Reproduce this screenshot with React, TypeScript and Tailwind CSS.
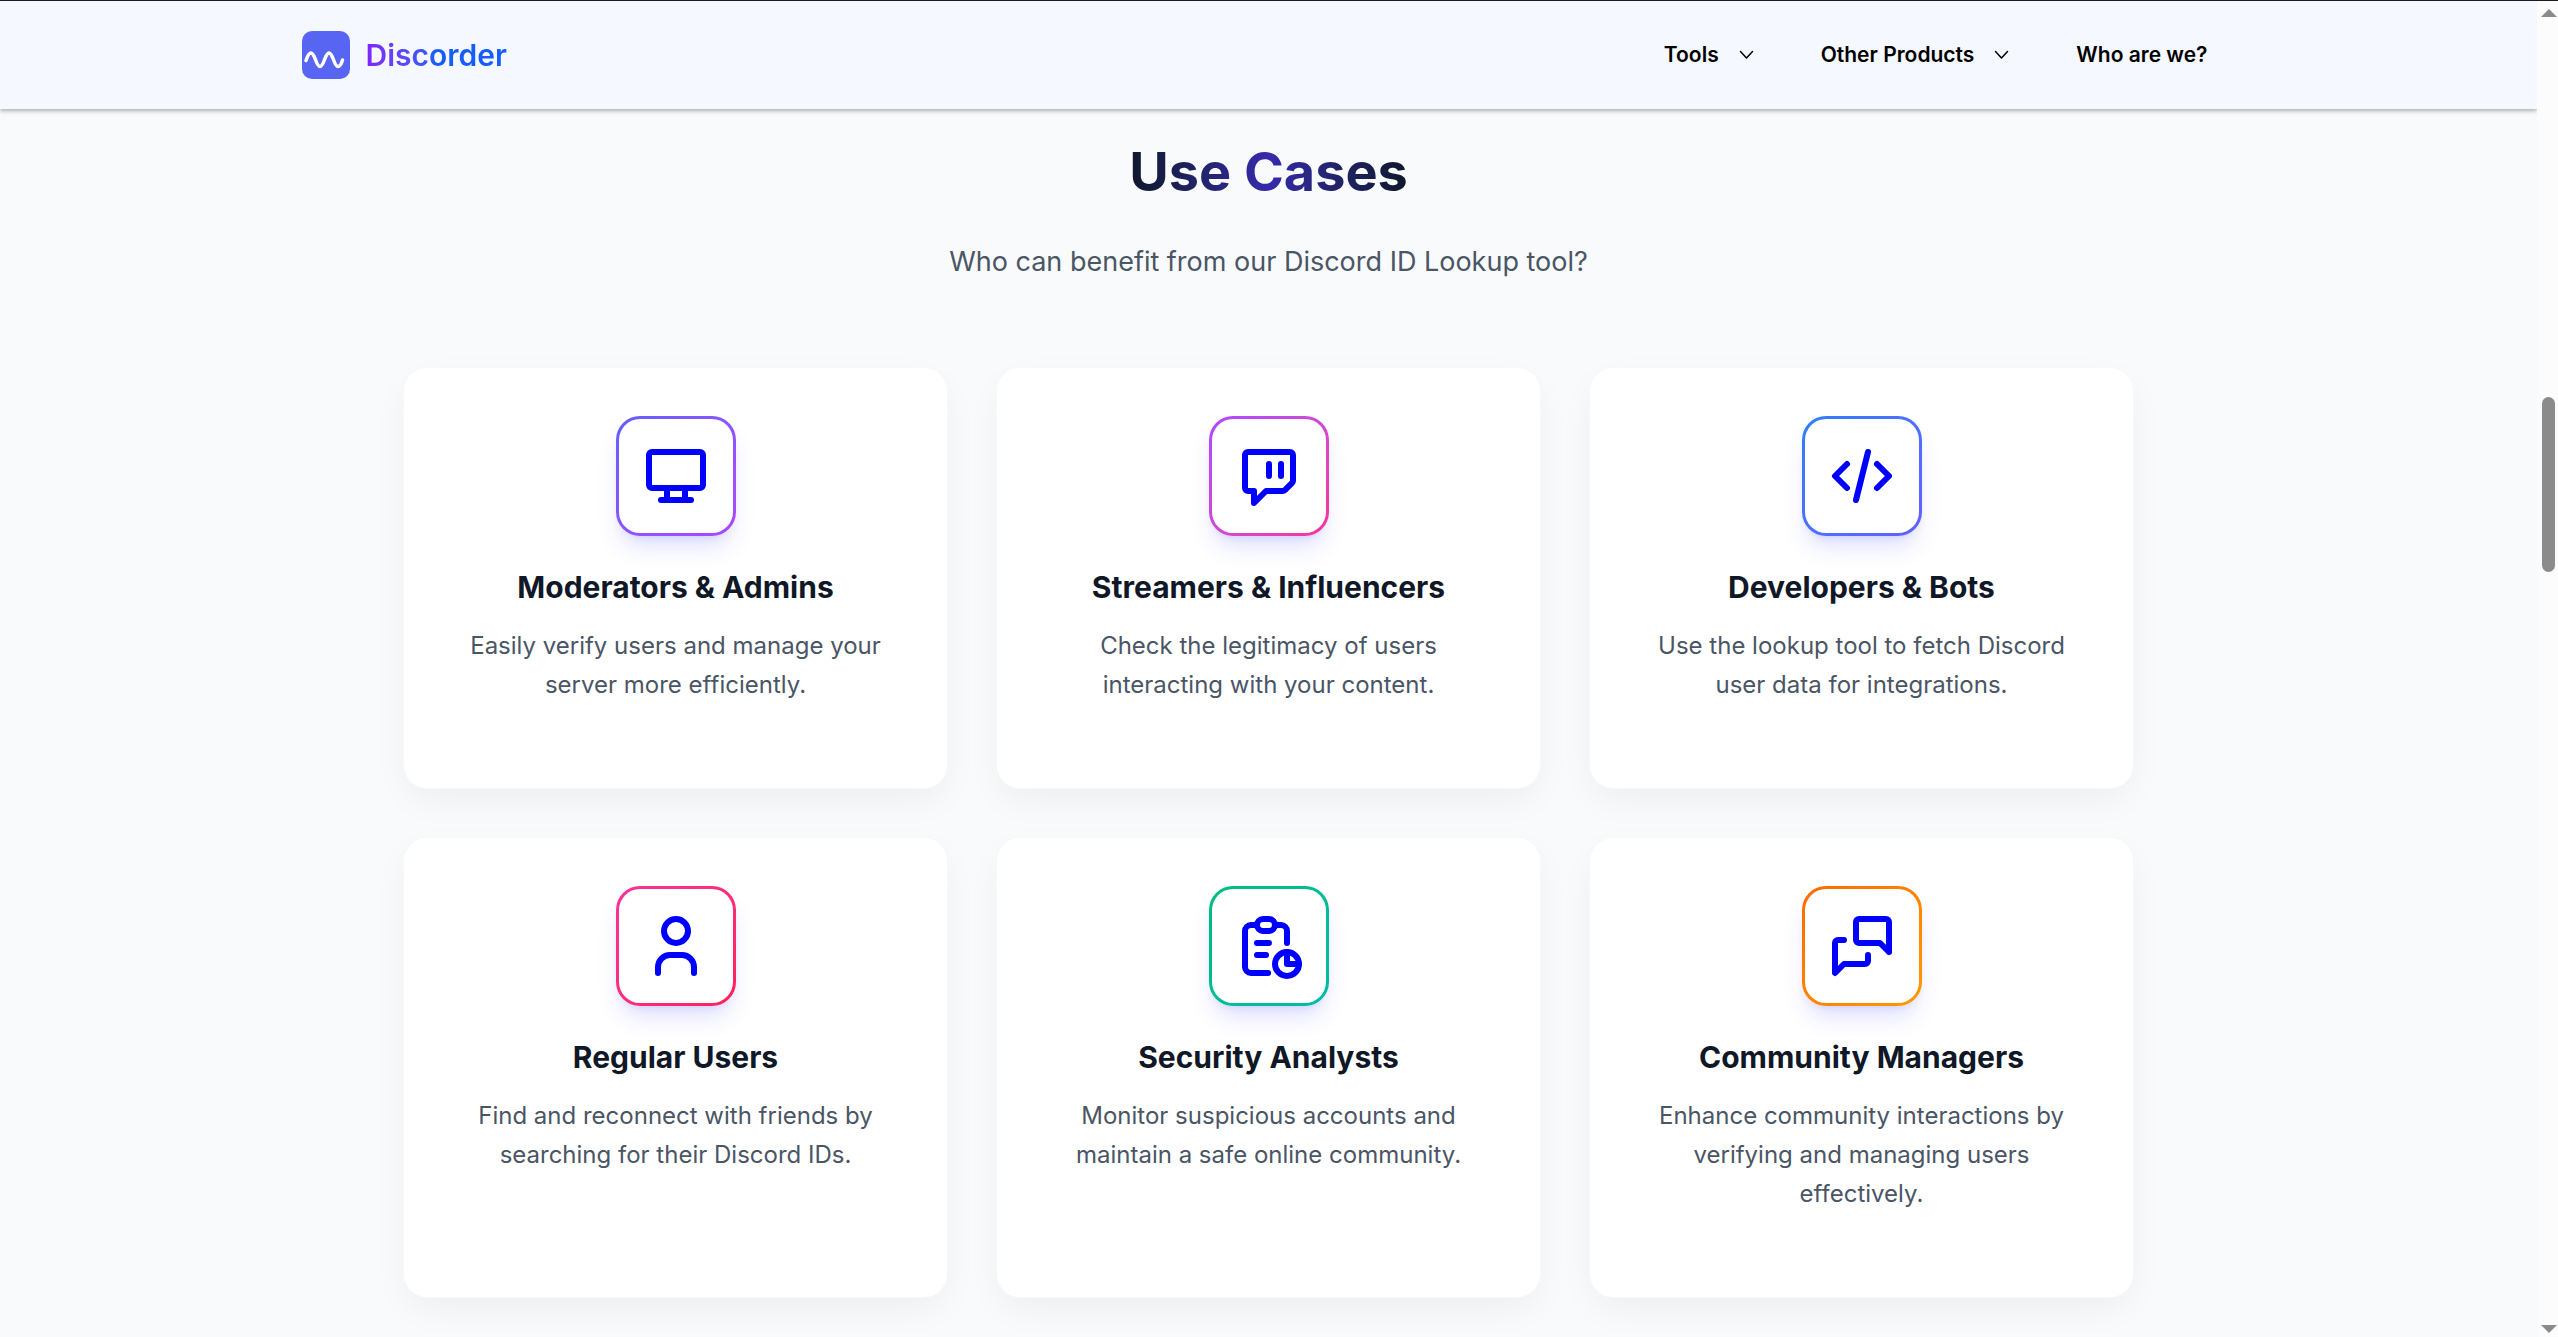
import type { ReactNode } from "react";
import { TbBrandTwitch, TbCode, TbDeviceDesktop, TbMessages, TbReport, TbUser } from "react-icons/tb";
import type { IconType } from "react-icons";

type UseCase = {
  title: string;
  text: string;
  icon: IconType;
  ring: string;
};

const useCases: UseCase[] = [
  {
    title: "Moderators & Admins",
    text: "Easily verify users and manage your server more efficiently.",
    icon: TbDeviceDesktop,
    ring: "from-indigo-500 to-purple-500",
  },
  {
    title: "Streamers & Influencers",
    text: "Check the legitimacy of users interacting with your content.",
    icon: TbBrandTwitch,
    ring: "from-purple-500 to-pink-500",
  },
  {
    title: "Developers & Bots",
    text: "Use the lookup tool to fetch Discord user data for integrations.",
    icon: TbCode,
    ring: "from-blue-500 to-indigo-500",
  },
  {
    title: "Regular Users",
    text: "Find and reconnect with friends by searching for their Discord IDs.",
    icon: TbUser,
    ring: "from-pink-500 to-rose-500",
  },
  {
    title: "Security Analysts",
    text: "Monitor suspicious accounts and maintain a safe online community.",
    icon: TbReport,
    ring: "from-emerald-500 to-teal-500",
  },
  {
    title: "Community Managers",
    text: "Enhance community interactions by verifying and managing users effectively.",
    icon: TbMessages,
    ring: "from-orange-500 to-amber-500",
  },
];

function Logo() {
  return (
    <a href="#home" className="flex items-center gap-4">
      <svg viewBox="0 0 48 48" className="size-12" aria-hidden="true">
        <rect width="48" height="48" rx="10" fill="#5865f2" />
        <path
          d="M4 29.500C5.500 25 7 22 9 22C13 22 14 35.500 18 35.500C22 35.500 23 22 27 22C31 22 32 35.500 36 35.500C38 35.500 39.500 32.500 40.500 29"
          fill="none"
          stroke="#fff"
          strokeWidth="3.500"
          strokeLinecap="round"
        />
      </svg>
      <span className="bg-linear-to-r from-violet-600 to-blue-600 to-50% bg-clip-text text-[30px] leading-9 font-semibold text-transparent">
        Discorder
      </span>
    </a>
  );
}

function NavMenu({ children }: { children: ReactNode }) {
  return (
    <button type="button" className="flex items-center gap-5">
      {children}
      <svg viewBox="0 0 16 10" className="h-[10px] w-4" fill="none" stroke="currentColor" strokeWidth="1.500" aria-hidden="true">
        <path d="M1.500 1.500 7.500 8l6-6.500" strokeLinecap="round" strokeLinejoin="round" />
      </svg>
    </button>
  );
}

function Header() {
  return (
    <header className="relative z-10 border-t border-[#1b1d22] bg-[#f5f8fe] shadow-[0_2px_4px_rgba(0,0,0,0.3)]">
      <div className="mx-auto flex h-27 max-w-[1934px] items-center justify-between pr-7">
        <Logo />
        <nav aria-label="Main" className="flex items-center gap-[66px] text-[21px] leading-8 font-semibold text-black">
          <NavMenu>Tools</NavMenu>
          <NavMenu>Other Products</NavMenu>
          <a href="#about">Who are we?</a>
        </nav>
      </div>
    </header>
  );
}

function Card({ title, text, icon: Icon, ring }: UseCase) {
  return (
    <article className="flex flex-col items-center rounded-3xl border border-gray-100/60 bg-white px-12 pt-12 pb-[84px] text-center shadow-[0_13px_38px_-6px_rgba(0,0,0,0.06)]">
      <div className={`size-30 rounded-3xl bg-linear-to-br p-[3px] shadow-[0_15px_23px_-5px_rgba(97,95,255,0.2),0_6px_9px_-6px_rgba(97,95,255,0.2)] ${ring}`}>
        <div className="flex size-full items-center justify-center rounded-[21px] bg-white">
          <Icon className="size-18 text-[#0000ff]" aria-hidden="true" />
        </div>
      </div>
      <h3 className="mt-[30px] text-[30px] leading-[42px] font-bold text-gray-900">{title}</h3>
      <p className="mt-[18px] text-2xl leading-[39px] text-gray-600">{text}</p>
    </article>
  );
}

function Scrollbar() {
  return (
    <div aria-hidden="true" className="flex w-[21px] shrink-0 flex-col items-center justify-between border-t border-[#1b1d22] bg-[#fcfcfc] pt-2 pb-1 pl-0.5">
      <svg viewBox="0 0 16 8" className="h-2 w-4" fill="#8b8b8b">
        <path d="M8 0l8 8H0z" />
      </svg>
      <div className="flex-1 pt-[380px]">
        <div className="h-[175px] w-[13px] rounded-full bg-[#8b8b8b]" />
      </div>
      <svg viewBox="0 0 16 8" className="h-2 w-4" fill="#8b8b8b">
        <path d="M0 0h16L8 8z" />
      </svg>
    </div>
  );
}

export default function App() {
  return (
    <div className="flex h-screen overflow-hidden font-['Inter',sans-serif]">
      <div className="min-w-0 flex-1 overflow-hidden bg-[#f9fafc]">
        <Header />
        <main className="mx-auto max-w-[1731px] pt-[33px]">
          <div className="flex flex-col items-center text-center">
            <h2 className="bg-linear-to-r from-slate-900 via-indigo-800 to-slate-900 bg-clip-text text-[54px] leading-15 font-bold text-transparent">
              Use Cases
            </h2>
            <p className="mt-9 text-[27px] leading-[48px] text-gray-600">Who can benefit from our Discord ID Lookup tool?</p>
          </div>
          <section aria-label="Use cases" className="mt-[81px] grid grid-cols-3 gap-12">
            {useCases.map((useCase) => (
              <Card key={useCase.title} {...useCase} />
            ))}
          </section>
        </main>
      </div>
      <Scrollbar />
    </div>
  );
}
